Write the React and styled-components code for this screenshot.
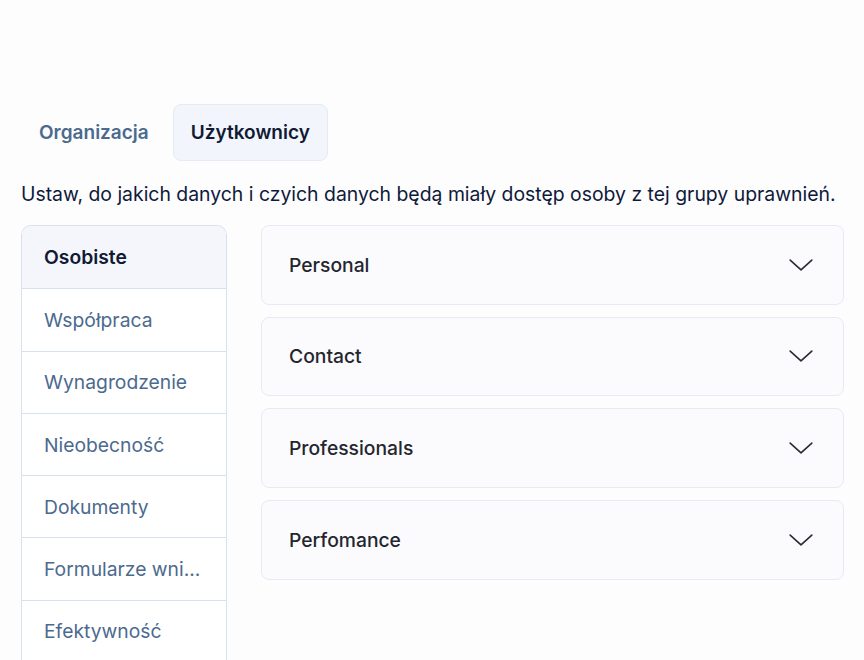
import React from "react";
import styled, { createGlobalStyle } from "styled-components";

const Global = createGlobalStyle`
  html, body { margin: 0; padding: 0; background: #fdfdfe; }
  body { font-family: Inter, "Noto Sans", sans-serif; }
  * { box-sizing: border-box; }
`;

const Page = styled.div`
  width: 864px;
  height: 660px;
  overflow: hidden;
  padding: 104px 20px 0 21px;
  display: flex;
  flex-direction: column;
`;

const Tabs = styled.div`
  display: flex;
  gap: 6px;
`;

const Tab = styled.div`
  height: 57px;
  padding: 0 17px;
  display: flex;
  align-items: center;
  font-size: 19px;
  font-weight: 600;
  border-radius: 8px;
  border: 1px solid ${(p) => (p.$active ? "#e6eaf5" : "transparent")};
  background: ${(p) => (p.$active ? "#f2f5fc" : "transparent")};
  color: ${(p) => (p.$active ? "#111a33" : "#4b6a8e")};
`;

const Description = styled.p`
  margin: 18px 0 0;
  font-size: 19.4px;
  line-height: 30px;
  color: #0f1a3a;
  white-space: nowrap;
`;

const Content = styled.div`
  margin-top: 16px;
  display: flex;
  gap: 34px;
  align-items: flex-start;
`;

const Sidebar = styled.div`
  width: 206px;
  flex: none;
  border: 1px solid #d8e1f2;
  border-bottom: none;
  border-radius: 10px 10px 0 0;
  overflow: hidden;
  background: #fff;
`;

const SideItem = styled.div`
  height: 62.3px;
  display: flex;
  align-items: center;
  padding-left: 22px;
  font-size: 19.3px;
  white-space: nowrap;
  font-weight: ${(p) => (p.$active ? 600 : 400)};
  color: ${(p) => (p.$active ? "#111a33" : "#4b6a8e")};
  background: ${(p) => (p.$active ? "#f4f6fc" : "#ffffff")};
  & + & { border-top: 1px solid #d8e1f2; }
`;

const Panels = styled.div`
  flex: 1;
  display: flex;
  flex-direction: column;
  gap: 12.2px;
`;

const Panel = styled.div`
  height: 79.5px;
  border: 1px solid #e7eaf6;
  border-radius: 8px;
  background: #fbfbfe;
  display: flex;
  align-items: center;
  justify-content: space-between;
  padding: 0 29px 0 27px;
`;

const PanelTitle = styled.span`
  font-size: 19.3px;
  font-weight: 500;
  color: #24262e;
`;

const Chevron = () => (
  <svg width="26" height="26" viewBox="0 0 24 24" fill="none" stroke="#2a2c33" strokeWidth="1.5" strokeLinecap="round" strokeLinejoin="round">
    <path d="M2 7.5l10 9 10-9" />
  </svg>
);

const side = ["Osobiste", "Współpraca", "Wynagrodzenie", "Nieobecność", "Dokumenty", "Formularze wni...", "Efektywność"];
const panels = ["Personal", "Contact", "Professionals", "Perfomance"];

export default function App() {
  return (
    <>
      <Global />
      <Page>
        <Tabs>
          <Tab>Organizacja</Tab>
          <Tab $active>Użytkownicy</Tab>
        </Tabs>
        <Description>Ustaw, do jakich danych i czyich danych będą miały dostęp osoby z tej grupy uprawnień.</Description>
        <Content>
          <Sidebar>
            {side.map((s, i) => (
              <SideItem key={s} $active={i === 0}>{s}</SideItem>
            ))}
          </Sidebar>
          <Panels>
            {panels.map((p) => (
              <Panel key={p}>
                <PanelTitle>{p}</PanelTitle>
                <Chevron />
              </Panel>
            ))}
          </Panels>
        </Content>
      </Page>
    </>
  );
}
